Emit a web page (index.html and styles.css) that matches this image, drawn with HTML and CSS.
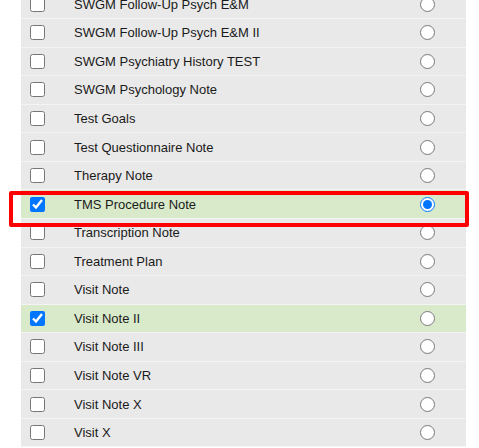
FILE: index.html
```html
<!DOCTYPE html>
<html>
<head>
<meta charset="utf-8">
<link rel="stylesheet" href="styles.css">
</head>
<body>
<div class="page">
  <ul class="list">
    <li class="row"><input type="checkbox" class="cb"><span class="label">SWGM Follow-Up Psych E&amp;M</span><input type="radio" name="d" class="rd"></li>
    <li class="row"><input type="checkbox" class="cb"><span class="label">SWGM Follow-Up Psych E&amp;M II</span><input type="radio" name="d" class="rd"></li>
    <li class="row"><input type="checkbox" class="cb"><span class="label">SWGM Psychiatry History TEST</span><input type="radio" name="d" class="rd"></li>
    <li class="row"><input type="checkbox" class="cb"><span class="label">SWGM Psychology Note</span><input type="radio" name="d" class="rd"></li>
    <li class="row"><input type="checkbox" class="cb"><span class="label">Test Goals</span><input type="radio" name="d" class="rd"></li>
    <li class="row"><input type="checkbox" class="cb"><span class="label">Test Questionnaire Note</span><input type="radio" name="d" class="rd"></li>
    <li class="row"><input type="checkbox" class="cb"><span class="label">Therapy Note</span><input type="radio" name="d" class="rd"></li>
    <li class="row selected"><input type="checkbox" class="cb" checked><span class="label">TMS Procedure Note</span><input type="radio" name="d" class="rd" checked></li>
    <li class="row"><input type="checkbox" class="cb"><span class="label">Transcription Note</span><input type="radio" name="d" class="rd"></li>
    <li class="row"><input type="checkbox" class="cb"><span class="label">Treatment Plan</span><input type="radio" name="d" class="rd"></li>
    <li class="row"><input type="checkbox" class="cb"><span class="label">Visit Note</span><input type="radio" name="d" class="rd"></li>
    <li class="row selected"><input type="checkbox" class="cb" checked><span class="label">Visit Note II</span><input type="radio" name="d" class="rd"></li>
    <li class="row"><input type="checkbox" class="cb"><span class="label">Visit Note III</span><input type="radio" name="d" class="rd"></li>
    <li class="row"><input type="checkbox" class="cb"><span class="label">Visit Note VR</span><input type="radio" name="d" class="rd"></li>
    <li class="row"><input type="checkbox" class="cb"><span class="label">Visit Note X</span><input type="radio" name="d" class="rd"></li>
    <li class="row"><input type="checkbox" class="cb"><span class="label">Visit X</span><input type="radio" name="d" class="rd"></li>
  </ul>
  <div class="highlight"></div>
</div>
</body>
</html>
```

FILE: styles.css
```css
html, body {
  margin: 0;
  padding: 0;
  background: #ffffff;
  overflow: hidden;
}

.page {
  position: relative;
  width: 479px;
  height: 448px;
  overflow: hidden;
}

.list {
  list-style: none;
  margin: -9.57px 0 0 21px;
  padding: 0;
  width: 445px;
  background: #e9e9e9;
}

.row {
  display: flex;
  align-items: center;
  height: 27.57px;
  border-bottom: 1px solid #f4f4f4;
  padding-left: 9px;
  background: #e9e9e9;
  font-family: "Liberation Sans", Arial, sans-serif;
  font-size: 13px;
  color: #1a1a1a;
}

.row.selected {
  background: #d9eacb;
}

.cb {
  width: 15px;
  height: 15px;
  margin: 0;
  flex: none;
  accent-color: #0075ff;
}

.label {
  flex: 1;
  margin-left: 29px;
  white-space: nowrap;
}

.rd {
  width: 15px;
  height: 15px;
  margin: 0 31px 0 0;
  flex: none;
  accent-color: #0075ff;
}

.highlight {
  position: absolute;
  left: 9px;
  top: 191px;
  width: 452px;
  height: 28px;
  border: 4px solid #ff0000;
  border-radius: 2px;
}
```
